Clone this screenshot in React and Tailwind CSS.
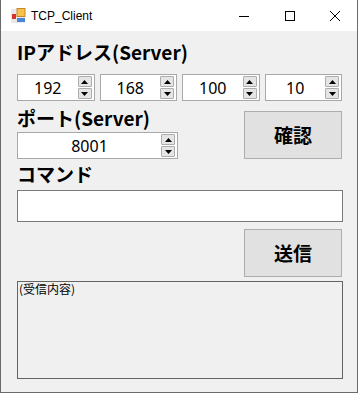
import React from 'react';

const jp = { fontFamily: '"Noto Sans CJK JP", "Noto Sans", sans-serif' };
const ui = { fontFamily: '"Noto Sans", "Noto Sans CJK JP", sans-serif' };

const Arrow = ({ up }) => (
  <svg width="7" height="4" viewBox="0 0 7 4">
    {up ? <path d="M0 4 L3.5 0 L7 4 Z" fill="#000" /> : <path d="M0 0 L3.5 4 L7 0 Z" fill="#000" />}
  </svg>
);

const SpinBox = ({ value, width }) => (
  <div className={`flex h-[27px] ${width} border border-[#a9a9a9] bg-white`}>
    <div className="flex flex-1 items-center justify-center text-[16px] text-black" style={ui}>
      {value}
    </div>
    <div className="flex flex-col gap-[1px] pt-[1px] pr-[2px]">
      <div className="flex h-[11px] w-[14px] items-center justify-center rounded-[1px] border border-[#adadad] bg-[#e5e5e5]">
        <Arrow up />
      </div>
      <div className="flex h-[11px] w-[14px] items-center justify-center rounded-[1px] border border-[#adadad] bg-[#e5e5e5]">
        <Arrow />
      </div>
    </div>
  </div>
);

const Label = ({ children }) => (
  <div className="h-[24px] text-[19px] font-bold leading-[24px] text-black" style={jp}>
    {children}
  </div>
);

const ActionButton = ({ children }) => (
  <button
    className="flex h-[48px] w-[98px] items-center justify-center border border-[#adadad] bg-[#e1e1e1] text-[19px] font-bold text-black"
    style={jp}
  >
    {children}
  </button>
);

export default function App() {
  return (
    <div className="flex h-[393px] w-[358px] flex-col border-r border-b border-l border-[#6a6a6a] bg-[#f0f0f0]">
      {/* Title bar */}
      <div className="flex h-[31px] shrink-0 items-center bg-white">
        <svg className="ml-[9px]" width="16" height="16" viewBox="0 0 16 16">
          <rect x="1" y="1" width="14" height="14" fill="#e8e8e8" />
          <rect x="7" y="0.5" width="8" height="8" fill="#f6c34a" stroke="#c8862a" />
          <rect x="2" y="6" width="4" height="5" fill="#d9302c" />
          <rect x="7" y="10" width="8" height="4" fill="#4a86d8" />
        </svg>
        <span className="ml-[5px] text-[12px] text-black" style={{ fontFamily: '"Segoe UI", "Liberation Sans", sans-serif' }}>
          TCP_Client
        </span>
        <div className="ml-auto flex h-full items-center">
          <div className="flex h-full w-[46px] items-center justify-center">
            <svg width="10" height="10" viewBox="0 0 10 10">
              <path d="M0 5.5 H10" stroke="#000" strokeWidth="1" />
            </svg>
          </div>
          <div className="flex h-full w-[46px] items-center justify-center">
            <svg width="10" height="10" viewBox="0 0 10 10">
              <rect x="0.5" y="0.5" width="9" height="9" fill="none" stroke="#000" strokeWidth="1" />
            </svg>
          </div>
          <div className="flex h-full w-[44px] items-center justify-center">
            <svg width="10" height="10" viewBox="0 0 10 10">
              <path d="M0 0 L10 10 M10 0 L0 10" stroke="#000" strokeWidth="1" />
            </svg>
          </div>
        </div>
      </div>

      {/* Body */}
      <div className="flex flex-1 flex-col pr-[15px] pl-[16px]">
        <div className="mt-[9px]">
          <Label>IPアドレス(Server)</Label>
        </div>
        <div className="mt-[10px] flex gap-[5px]">
          <SpinBox value="192" width="w-[78px]" />
          <SpinBox value="168" width="w-[78px]" />
          <SpinBox value="100" width="w-[78px]" />
          <SpinBox value="10" width="w-[78px]" />
        </div>

        <div className="mt-[5px] flex items-start justify-between">
          <div className="flex flex-col">
            <Label>ポート(Server)</Label>
            <div className="mt-[2px]">
              <SpinBox value="8001" width="w-[161px]" />
            </div>
          </div>
          <div className="mt-[5px]">
            <ActionButton>確認</ActionButton>
          </div>
        </div>

        <div className="mt-[3px]">
          <Label>コマンド</Label>
        </div>
        <div className="mt-[4px] h-[32px] w-[326px] border border-[#7a7a7a] bg-white" />

        <div className="mt-[7px] flex justify-end">
          <ActionButton>送信</ActionButton>
        </div>

        <div className="mt-[4px] h-[98px] w-[326px] border border-[#646464] bg-[#f0f0f0]">
          <div className="pl-[1px] text-[12px] leading-[14px] text-black" style={jp}>
            (受信内容)
          </div>
        </div>
      </div>
    </div>
  );
}
